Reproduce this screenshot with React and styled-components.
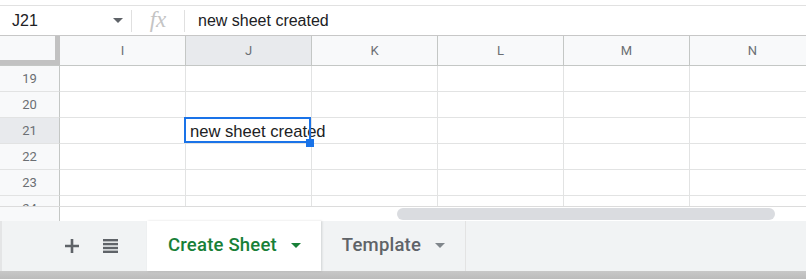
import React from 'react'
import styled, { createGlobalStyle } from 'styled-components'

// sheet editor strip: formula bar, a few rows of the grid, sheet tabs

const GlobalStyle = createGlobalStyle`
    html, body {
        margin: 0;
        padding: 0;
        background: #ffffff;
        overflow: hidden;
    }
    * {
        box-sizing: border-box;
    }
`;

const Container = styled.div`
    width: 806px;
    height: 279px;
    overflow: hidden;
    display: flex;
    flex-direction: column;
    background: #ffffff;
`;

const TopGap = styled.div`
    height: 6px;
    flex-shrink: 0;
    border-bottom: 1px solid #e1e1e1;
`;

const FormulaBar = styled.div`
    height: 30px;
    flex-shrink: 0;
    display: flex;
    align-items: center;
    border-bottom: 1px solid #c7c7c7;
`;

const NameBox = styled.div`
    width: 131px;
    height: 100%;
    display: flex;
    align-items: center;
    justify-content: space-between;
    padding: 0 8px 0 12px;
    font-family: "Liberation Sans", Arial, sans-serif;
    font-size: 16px;
    color: #202124;
`;

const Divider = styled.div`
    width: 1px;
    height: 22px;
    background: #e0e0e0;
`;

const FxBox = styled.div`
    width: 52px;
    display: flex;
    justify-content: center;
    font-family: "Liberation Serif", "Times New Roman", serif;
    font-style: italic;
    font-size: 23px;
    color: #c4c4c4;
    line-height: 1;
    padding-bottom: 2px;
`;

const FormulaText = styled.div`
    padding-left: 13px;
    font-family: "Liberation Sans", Arial, sans-serif;
    font-size: 16px;
    color: #202124;
`;

const Caret = styled.span`
    display: inline-block;
    width: 0;
    height: 0;
    border-left: ${p => p.size}px solid transparent;
    border-right: ${p => p.size}px solid transparent;
    border-top: ${p => p.size}px solid ${p => p.color};
`;

const GridRow = styled.div`
    display: grid;
    grid-template-columns: 60px repeat(6, 126px);
    height: ${p => p.height}px;
    flex-shrink: 0;
`;

const Corner = styled.div`
    background: #f8f9fa;
    border-bottom: 1px solid #c4c7c5;
    box-shadow: inset -5px -5px 0 #c2c2c2;
`;

const ColHead = styled.div`
    display: flex;
    align-items: center;
    justify-content: center;
    background: ${p => (p.active ? '#e8eaed' : '#f8f9fa')};
    border-right: 1px solid #c4c7c5;
    border-bottom: 1px solid #c4c7c5;
    font-family: Roboto, "Noto Sans", sans-serif;
    font-size: 13px;
    color: #6b6f73;
`;

const Body = styled.div`
    height: 141px;
    flex-shrink: 0;
    overflow: hidden;
    display: flex;
    flex-direction: column;
    border-bottom: 1px solid #dcdcdc;
`;

const RowHead = styled.div`
    display: flex;
    align-items: center;
    justify-content: center;
    background: ${p => (p.active ? '#e8eaed' : '#f8f9fa')};
    border-right: 1px solid #c4c7c5;
    border-bottom: 1px solid #e2e3e3;
    font-family: Roboto, "Noto Sans", sans-serif;
    font-size: 13px;
    color: #6b6f73;
`;

const Cell = styled.div`
    position: relative;
    border-right: 1px solid #e2e3e3;
    border-bottom: 1px solid #e2e3e3;
    white-space: nowrap;
    overflow: visible;
    font-family: "Liberation Sans", Arial, sans-serif;
    font-size: 16.6px;
    color: #202124;
    padding: 4px 0 0 4px;
    z-index: ${p => (p.selected ? 2 : 1)};
`;

const Selection = styled.div`
    position: absolute;
    top: -1px;
    left: -2px;
    right: 0;
    bottom: 0;
    border: 2px solid #1a73e8;
    pointer-events: none;
`;

const FillHandle = styled.div`
    position: absolute;
    left: 120px;
    top: 21px;
    width: 8px;
    height: 8px;
    background: #1a73e8;
`;

const ScrollArea = styled.div`
    height: 14px;
    flex-shrink: 0;
    display: flex;
`;

const ScrollStub = styled.div`
    width: 60px;
    background: #f8f9fa;
    border-right: 1px solid #c4c7c5;
`;

const Track = styled.div`
    flex: 1;
    padding: 1px 0 0 337px;
`;

const Thumb = styled.div`
    width: 378px;
    height: 12px;
    border-radius: 6px;
    background: #dadce0;
`;

const TabBar = styled.div`
    height: 50px;
    flex-shrink: 0;
    display: flex;
    background: #f1f3f4;
    border-left: 2px solid #e4e5e6;
`;

const Tools = styled.div`
    width: 145px;
    display: flex;
    align-items: center;
    gap: 24px;
    padding-left: 63px;
    color: #5f6368;
`;

const Tab = styled.div`
    display: flex;
    align-items: center;
    gap: 14px;
    padding: 0 20px 0 21px;
    background: ${p => (p.active ? '#ffffff' : 'transparent')};
    box-shadow: ${p => (p.active ? '1px 0 2px rgba(60, 64, 67, 0.18)' : 'none')};
    border-right: ${p => (p.active ? 'none' : '1px solid #e3e3e3')};
    font-family: Roboto, "Noto Sans", sans-serif;
    font-size: 18.5px;
    font-weight: 500;
    letter-spacing: 0.2px;
    color: ${p => (p.active ? '#188038' : '#5f6368')};
    padding-bottom: 2px;
    position: relative;
    z-index: ${p => (p.active ? 1 : 0)};
`;

const BottomEdge = styled.div`
    flex: 1;
    background: linear-gradient(#c8c8c8, #bcbcbc);
`;

const columns = ['I', 'J', 'K', 'L', 'M', 'N'];
const rows = [19, 20, 21, 22, 23, 24];

const PlusIcon = () => (
  <svg width="14" height="14" viewBox="0 0 14 14">
    <path d="M7 0v14M0 7h14" stroke="currentColor" strokeWidth="2.6" fill="none" />
  </svg>
);

const ListIcon = () => (
  <svg width="15" height="14" viewBox="0 0 15 14" fill="currentColor">
    <rect x="0" y="0" width="15" height="2.4" />
    <rect x="0" y="3.9" width="15" height="2.4" />
    <rect x="0" y="7.8" width="15" height="2.4" />
    <rect x="0" y="11.6" width="15" height="2.4" />
  </svg>
);

const App = () => {
    return (
      <>
        <GlobalStyle />
        <Container>
          <TopGap />
          <FormulaBar>
            <NameBox>
              J21
              <Caret size={5} color="#5f6368" />
            </NameBox>
            <Divider />
            <FxBox>fx</FxBox>
            <Divider />
            <FormulaText>new sheet created</FormulaText>
          </FormulaBar>

          <GridRow height={30}>
            <Corner />
            {columns.map(c => (
              <ColHead key={c} active={c === 'J'}>{c}</ColHead>
            ))}
          </GridRow>

          <Body>
            {rows.map(r => (
              <GridRow key={r} height={26}>
                <RowHead active={r === 21}>{r}</RowHead>
                {columns.map(c => {
                    const selected = r === 21 && c === 'J';
                    return (
                      <Cell key={c} selected={selected}>
                        {selected && 'new sheet created'}
                        {selected && <Selection />}
                        {selected && <FillHandle />}
                      </Cell>
                    );
                })}
              </GridRow>
            ))}
          </Body>

          <ScrollArea>
            <ScrollStub />
            <Track>
              <Thumb />
            </Track>
          </ScrollArea>

          <TabBar>
            <Tools>
              <PlusIcon />
              <ListIcon />
            </Tools>
            <Tab active>
              Create Sheet
              <Caret size={5} color="#188038" />
            </Tab>
            <Tab>
              Template
              <Caret size={5} color="#80868b" />
            </Tab>
          </TabBar>
          <BottomEdge />
        </Container>
      </>
    )
}

export default App;
